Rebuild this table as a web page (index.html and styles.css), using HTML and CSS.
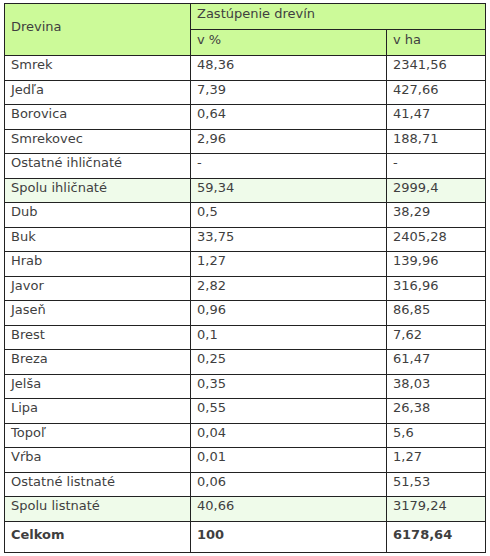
FILE: index.html
```html
<!DOCTYPE html>
<html lang="sk">
<head>
<meta charset="utf-8">
<link rel="stylesheet" href="styles.css">
</head>
<body>
<table class="tbl">
  <tr class="head">
    <td rowspan="2" class="c1">Drevina</td>
    <td colspan="2">Zastúpenie drevín</td>
  </tr>
  <tr class="head">
    <td class="c2">v %</td>
    <td class="c3">v ha</td>
  </tr>
  <tr><td>Smrek</td><td>48,36</td><td>2341,56</td></tr>
  <tr><td>Jedľa</td><td>7,39</td><td>427,66</td></tr>
  <tr><td>Borovica</td><td>0,64</td><td>41,47</td></tr>
  <tr><td>Smrekovec</td><td>2,96</td><td>188,71</td></tr>
  <tr><td>Ostatné ihličnaté</td><td>-</td><td>-</td></tr>
  <tr class="sum"><td>Spolu ihličnaté</td><td>59,34</td><td>2999,4</td></tr>
  <tr><td>Dub</td><td>0,5</td><td>38,29</td></tr>
  <tr><td>Buk</td><td>33,75</td><td>2405,28</td></tr>
  <tr><td>Hrab</td><td>1,27</td><td>139,96</td></tr>
  <tr><td>Javor</td><td>2,82</td><td>316,96</td></tr>
  <tr><td>Jaseň</td><td>0,96</td><td>86,85</td></tr>
  <tr><td>Brest</td><td>0,1</td><td>7,62</td></tr>
  <tr><td>Breza</td><td>0,25</td><td>61,47</td></tr>
  <tr><td>Jelša</td><td>0,35</td><td>38,03</td></tr>
  <tr><td>Lipa</td><td>0,55</td><td>26,38</td></tr>
  <tr><td>Topoľ</td><td>0,04</td><td>5,6</td></tr>
  <tr><td>Vŕba</td><td>0,01</td><td>1,27</td></tr>
  <tr><td>Ostatné listnaté</td><td>0,06</td><td>51,53</td></tr>
  <tr class="sum"><td>Spolu listnaté</td><td>40,66</td><td>3179,24</td></tr>
  <tr class="total"><td>Celkom</td><td>100</td><td>6178,64</td></tr>
</table>
</body>
</html>
```
FILE: styles.css
```css
html, body {
  margin: 0;
  padding: 0;
  background: #fff;
}
body {
  padding: 3px 0 0 4px;
  font-family: "DejaVu Sans", Verdana, sans-serif;
  font-size: 13px;
  color: #3f3f3f;
}
.tbl {
  border-collapse: collapse;
  width: 482px;
}
.tbl td {
  border: 1px solid #222;
  padding: 1px 6px 0;
  height: 22.5px;
  text-align: left;
  vertical-align: top;
  line-height: 16px;
}
.head td {
  background: #ccfa99;
  padding-top: 2px;
  height: 23px;
}
.head td.c1 {
  vertical-align: middle;
  padding: 0 6px 6px;
}
.c1 { width: 173px; }
.c3 { width: 86px; }
.sum td { background: #effbea; }
.total td {
  font-weight: bold;
  height: 25px;
  padding-top: 5px;
}
```
